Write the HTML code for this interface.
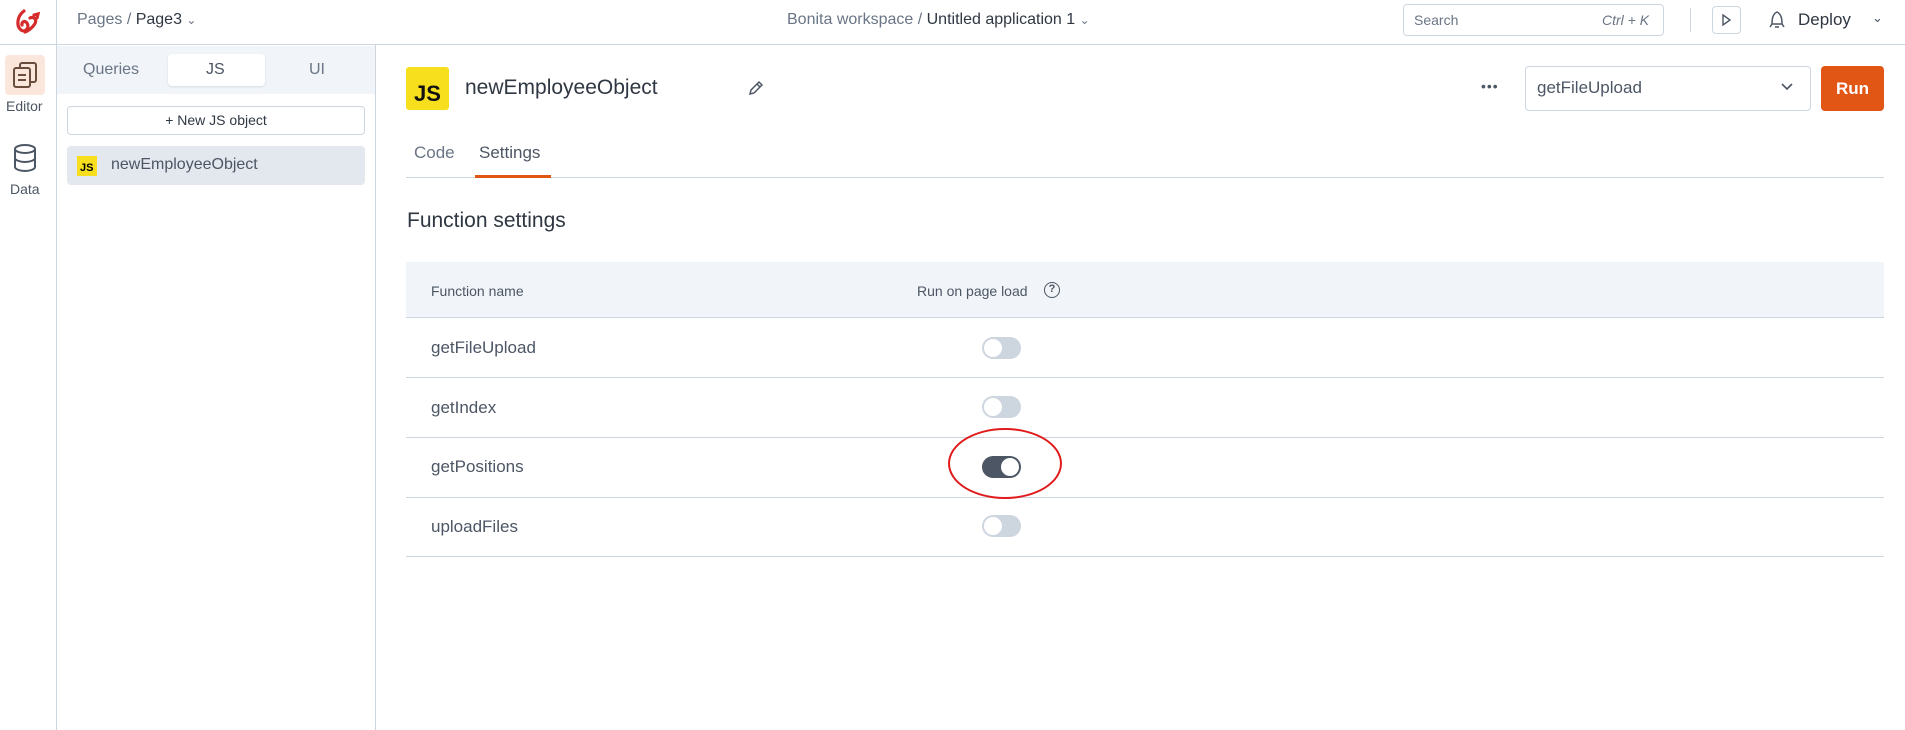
<!DOCTYPE html>
<html><head><meta charset="utf-8"><style>
*{box-sizing:border-box;margin:0;padding:0}
body{width:1905px;height:730px;overflow:hidden;background:#fff;font-family:"Liberation Sans",sans-serif;color:#4c5664;position:relative}
.a{position:absolute}
.tog{position:absolute;width:39px;height:22px;border-radius:11px;background:#cdd5df}
.tog::after{content:"";position:absolute;left:2px;top:2px;width:18px;height:18px;border-radius:50%;background:#fff}
.tog.on{background:#4c5664}
.tog.on::after{left:19px}
</style></head><body>
<!-- top bar -->
<div class="a" style="left:0;top:0;width:1905px;height:45px;border-bottom:1px solid #cdd5df"></div>
<div class="a" style="left:56px;top:0;width:1px;height:45px;background:#cdd5df"></div>
<svg class="a" style="left:12px;top:8px" width="32" height="28" viewBox="0 0 32 28"><path d="M12 3 C5 8 4 18 9 22 C13 25 18 20 15 15 C13 12 9 14 10 17 M18 10 C22 8 26 12 22 17 C20 20 16 23 13 24 M22 7 l4 -1 l-1 4" fill="none" stroke="#d52b2b" stroke-width="3.2" stroke-linecap="round"/></svg>
<div class="a" style="left:77px;top:11px;font-size:16px;color:#6a7585">Pages / <span style="color:#2f3742">Page3</span> <span style="font-size:12px">⌄</span></div>
<div class="a" style="left:787px;top:11px;font-size:16px;color:#6a7585">Bonita workspace / <span style="color:#2f3742">Untitled application 1</span> <span style="font-size:12px">⌄</span></div>
<div class="a" style="left:1403px;top:4px;width:261px;height:32px;border:1px solid #cdd5df;border-radius:4px"></div>
<div class="a" style="left:1414px;top:12px;font-size:14px;color:#6a7585">Search</div>
<div class="a" style="left:1602px;top:12px;font-size:14px;color:#6a7585;font-style:italic">Ctrl + K</div>
<div class="a" style="left:1690px;top:8px;width:1px;height:24px;background:#cdd5df"></div>
<div class="a" style="left:1712px;top:6px;width:29px;height:28px;border:1px solid #cdd5df;border-radius:4px"></div>
<svg class="a" style="left:1720px;top:14px" width="12" height="12"><path d="M3 1 L10 6 L3 11 Z" fill="none" stroke="#4c5664" stroke-width="1.4"/></svg>
<svg class="a" style="left:1768px;top:10px" width="18" height="20"><path d="M9 2 C5 4 4 8 4 14 L14 14 C14 8 13 4 9 2 Z M4 14 L2 17 M14 14 L16 17 M7 17 L11 17" fill="none" stroke="#4c5664" stroke-width="1.5"/></svg>
<div class="a" style="left:1798px;top:10px;font-size:17px;color:#2f3742">Deploy</div>
<div class="a" style="left:1872px;top:10px;font-size:13px;color:#4c5664">⌄</div>
<!-- rail -->
<div class="a" style="left:56px;top:45px;width:1px;height:685px;background:#cdd5df"></div>
<div class="a" style="left:5px;top:55px;width:40px;height:40px;background:#fbe6dc;border-radius:4px"></div>
<svg class="a" style="left:10px;top:60px" width="30" height="30" viewBox="0 0 30 30"><rect x="10" y="3" width="16" height="19" rx="2" fill="none" stroke="#6b4d3e" stroke-width="2"/><rect x="4" y="8" width="16" height="19" rx="2" fill="#fbe6dc" stroke="#6b4d3e" stroke-width="2"/><path d="M8 15h8M8 20h8" stroke="#6b4d3e" stroke-width="2"/></svg>
<div class="a" style="left:6px;top:98px;font-size:14px;color:#4c5664">Editor</div>
<svg class="a" style="left:12px;top:143px" width="26" height="30" viewBox="0 0 26 30"><ellipse cx="13" cy="6" rx="10" ry="4" fill="none" stroke="#4c5664" stroke-width="2"/><path d="M3 6v18c0 2 4.5 4 10 4s10-2 10-4V6M3 15c0 2 4.5 4 10 4s10-2 10-4" fill="none" stroke="#4c5664" stroke-width="2"/></svg>
<div class="a" style="left:10px;top:181px;font-size:14px;color:#4c5664">Data</div>
<!-- sidebar -->
<div class="a" style="left:375px;top:45px;width:1px;height:685px;background:#cdd5df"></div>
<div class="a" style="left:57px;top:46px;width:318px;height:48px;background:#f1f4f8"></div>
<div class="a" style="left:168px;top:54px;width:97px;height:32px;background:#fff;border-radius:4px;box-shadow:0 1px 2px rgba(0,0,0,.1)"></div>
<div class="a" style="left:83px;top:61px;font-size:16px;color:#6a7585">Queries</div>
<div class="a" style="left:206px;top:61px;font-size:16px;color:#4c5664">JS</div>
<div class="a" style="left:309px;top:61px;font-size:16px;color:#6a7585">UI</div>
<div class="a" style="left:67px;top:106px;width:298px;height:29px;border:1px solid #cdd5df;border-radius:4px;text-align:center;font-size:14px;line-height:27px;color:#2f3742">+ New JS object</div>
<div class="a" style="left:67px;top:146px;width:298px;height:39px;background:#e3e8ef;border-radius:4px"></div>
<div class="a" style="left:77px;top:156px;width:20px;height:20px;background:#f7df1e;font-size:11px;font-weight:bold;color:#000;padding:7px 0 0 3px;line-height:11px">JS</div>
<div class="a" style="left:111px;top:156px;font-size:16px;color:#4c5664">newEmployeeObject</div>
<!-- main header -->
<div class="a" style="left:406px;top:67px;width:43px;height:43px;background:#f7df1e;border-radius:3px;font-size:22px;font-weight:bold;color:#111;padding:16px 0 0 8px;line-height:22px">JS</div>
<div class="a" style="left:465px;top:76px;font-size:21px;color:#2f3742">newEmployeeObject</div>
<svg class="a" style="left:748px;top:80px" width="16" height="16"><path d="M2 14 L3 10 L11 2 L14 5 L6 13 Z M9 4 L12 7" fill="none" stroke="#4c5664" stroke-width="1.5"/></svg>
<div class="a" style="left:1481px;top:78px;font-size:14px;color:#4c5664;letter-spacing:1px">•••</div>
<div class="a" style="left:1525px;top:66px;width:286px;height:45px;border:1px solid #cdd5df;border-radius:4px"></div>
<div class="a" style="left:1537px;top:78px;font-size:17px;color:#4c5664">getFileUpload</div>
<svg class="a" style="left:1780px;top:82px" width="14" height="10"><path d="M2 2 L7 7 L12 2" fill="none" stroke="#4c5664" stroke-width="1.6"/></svg>
<div class="a" style="left:1821px;top:66px;width:63px;height:45px;background:#e15615;border-radius:4px;color:#fff;font-size:17px;font-weight:bold;text-align:center;line-height:45px">Run</div>
<div class="a" style="left:414px;top:143px;font-size:17px;color:#6a7585">Code</div>
<div class="a" style="left:479px;top:143px;font-size:17px;color:#4c5664">Settings</div>
<div class="a" style="left:406px;top:177px;width:1478px;height:1px;background:#cdd5df"></div>
<div class="a" style="left:475px;top:175px;width:76px;height:3px;background:#e15615"></div>
<div class="a" style="left:407px;top:209px;font-size:21px;color:#2f3742">Function settings</div>
<!-- table -->
<div class="a" style="left:406px;top:262px;width:1478px;height:56px;background:#f1f4f8;border-bottom:1px solid #cdd5df"></div>
<div class="a" style="left:431px;top:283px;font-size:14px;color:#4c5664">Function name</div>
<div class="a" style="left:917px;top:283px;font-size:14px;color:#4c5664">Run on page load</div>
<div class="a" style="left:1044px;top:282px;width:16px;height:16px;border:1.5px solid #4c5664;border-radius:50%;font-size:11px;text-align:center;line-height:13px;font-weight:bold">?</div>
<div class="a" style="left:406px;top:377px;width:1478px;height:1px;background:#cdd5df"></div>
<div class="a" style="left:406px;top:437px;width:1478px;height:1px;background:#cdd5df"></div>
<div class="a" style="left:406px;top:497px;width:1478px;height:1px;background:#cdd5df"></div>
<div class="a" style="left:406px;top:556px;width:1478px;height:1px;background:#cdd5df"></div>
<div class="a" style="left:431px;top:338px;font-size:17px">getFileUpload</div>
<div class="a" style="left:431px;top:398px;font-size:17px">getIndex</div>
<div class="a" style="left:431px;top:457px;font-size:17px">getPositions</div>
<div class="a" style="left:431px;top:517px;font-size:17px">uploadFiles</div>
<div class="tog" style="left:982px;top:337px"></div>
<div class="tog" style="left:982px;top:396px"></div>
<div class="tog on" style="left:982px;top:456px"></div>
<div class="tog" style="left:982px;top:515px"></div>
<div class="a" style="left:948px;top:428px;width:114px;height:71px;border:2.5px solid #e01b1b;border-radius:50%"></div>
</body></html>
